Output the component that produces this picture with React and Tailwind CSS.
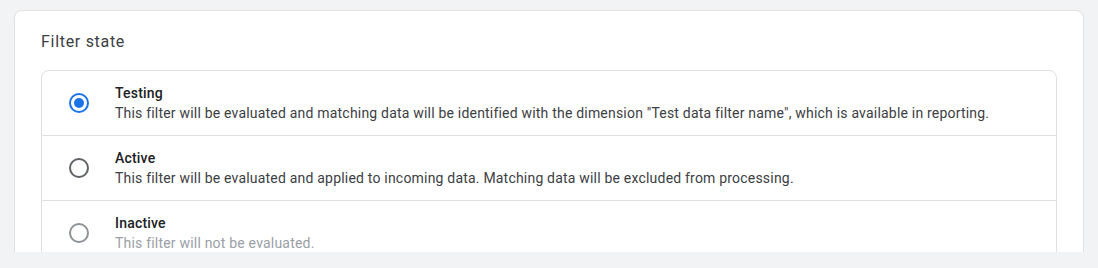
const options = [
  {
    name: "Testing",
    desc: 'This filter will be evaluated and matching data will be identified with the dimension "Test data filter name", which is available in reporting.',
    checked: true,
  },
  {
    name: "Active",
    desc: "This filter will be evaluated and applied to incoming data. Matching data will be excluded from processing.",
  },
  {
    name: "Inactive",
    desc: "This filter will not be evaluated.",
    muted: true,
  },
]

function Radio({ checked, muted }) {
  if (checked) {
    return (
      <span className="flex h-5 w-5 shrink-0 items-center justify-center rounded-full border-2 border-[#1a73e8]">
        <span className="h-2.5 w-2.5 rounded-full bg-[#1a73e8]"></span>
      </span>
    )
  }
  return (
    <span
      className={"h-5 w-5 shrink-0 rounded-full border-2 " + (muted ? "border-[#8e9297]" : "border-[#5f6368]")}
    ></span>
  )
}

export default function App() {
  return (
    <div className="h-[268px] w-[1098px] bg-[#f1f3f4] font-['Roboto',sans-serif]">
      <div className="h-[252px] overflow-hidden px-[14px] pt-[10px]">
        <div className="h-[300px] rounded-lg border border-[#e0e0e0] bg-white px-[26px] pt-[19px]">
          <h2 className="text-base leading-6 tracking-[0.7px] text-[#3c4043]">Filter state</h2>
          <div className="mt-[16px] rounded-lg border border-[#e0e0e0]">
            {options.map((o, i) => (
              <div
                key={o.name}
                className={"box-content flex h-[64px] items-center " + (i > 0 ? "border-t border-[#e0e0e0]" : "")}
              >
                <div className="flex w-[73px] justify-center pl-[1px]">
                  <Radio checked={o.checked} muted={o.muted} />
                </div>
                <div className="flex flex-col tracking-[0.2px]">
                  <span className="text-sm font-medium leading-5 text-[#202124]">{o.name}</span>
                  <span className={"text-sm leading-5 " + (o.muted ? "text-[#9aa0a6]" : "text-[#3c4043]")}>
                    {o.desc}
                  </span>
                </div>
              </div>
            ))}
          </div>
        </div>
      </div>
    </div>
  )
}
